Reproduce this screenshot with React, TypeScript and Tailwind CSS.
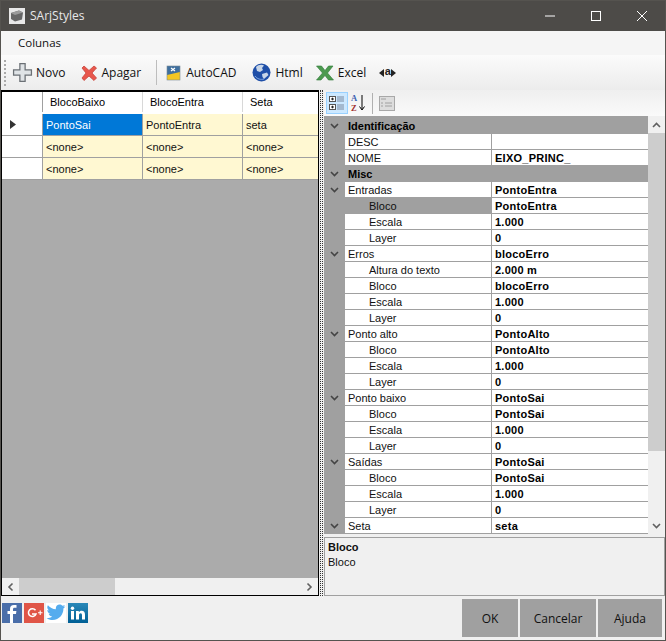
type PropRow = { label: string; value?: string; kind?: "cat" | "group" | "child" | "plain"; selected?: boolean };

const propRows: PropRow[] = [
  { label: "Identificação", kind: "cat" },
  { label: "DESC", value: "", kind: "plain" },
  { label: "NOME", value: "EIXO_PRINC_", kind: "plain" },
  { label: "Misc", kind: "cat" },
  { label: "Entradas", value: "PontoEntra", kind: "group" },
  { label: "Bloco", value: "PontoEntra", kind: "child", selected: true },
  { label: "Escala", value: "1.000", kind: "child" },
  { label: "Layer", value: "0", kind: "child" },
  { label: "Erros", value: "blocoErro", kind: "group" },
  { label: "Altura do texto", value: "2.000 m", kind: "child" },
  { label: "Bloco", value: "blocoErro", kind: "child" },
  { label: "Escala", value: "1.000", kind: "child" },
  { label: "Layer", value: "0", kind: "child" },
  { label: "Ponto alto", value: "PontoAlto", kind: "group" },
  { label: "Bloco", value: "PontoAlto", kind: "child" },
  { label: "Escala", value: "1.000", kind: "child" },
  { label: "Layer", value: "0", kind: "child" },
  { label: "Ponto baixo", value: "PontoSai", kind: "group" },
  { label: "Bloco", value: "PontoSai", kind: "child" },
  { label: "Escala", value: "1.000", kind: "child" },
  { label: "Layer", value: "0", kind: "child" },
  { label: "Saídas", value: "PontoSai", kind: "group" },
  { label: "Bloco", value: "PontoSai", kind: "child" },
  { label: "Escala", value: "1.000", kind: "child" },
  { label: "Layer", value: "0", kind: "child" },
  { label: "Seta", value: "seta", kind: "group" },
];

const gridRows = [
  ["PontoSai", "PontoEntra", "seta"],
  ["<none>", "<none>", "<none>"],
  ["<none>", "<none>", "<none>"],
];

function Chevron({ up = false, className = "" }: { up?: boolean; className?: string }) {
  return (
    <svg width="9" height="6" viewBox="0 0 9 6" className={className}>
      <path d={up ? "M1 5L4.5 1.5L8 5" : "M1 1L4.5 4.5L8 1"} fill="none" stroke="currentColor" strokeWidth="1.6" />
    </svg>
  );
}

function ToolButton({ icon, label, className = "" }: { icon: React.ReactNode; label: string; className?: string }) {
  return (
    <div className={`flex items-center gap-[3px] ${className}`}>
      {icon}
      <span className="text-[12px] text-[#111]">{label}</span>
    </div>
  );
}

function SocialIcons() {
  return (
    <div className="flex gap-[2px] pl-[1px] pt-[7px]">
      <svg width="20" height="20" viewBox="0 0 20 20">
        <rect width="20" height="20" fill="#4a6ea9" />
        <path d="M11 20V11H14L14.400 8H11V6.300C11 5.400 11.400 4.800 12.500 4.800H14.500V2H12C9.300 2 8 3.600 8 6V8H5.500V11H8V20Z" fill="#fff" />
      </svg>
      <svg width="20" height="20" viewBox="0 0 20 20">
        <rect width="20" height="20" fill="#e05547" />
        <path d="M11.500 7.300A3.900 3.900 0 1 0 12 11H8" fill="none" stroke="#fff" strokeWidth="1.500" />
        <path d="M14 9.800H18.500M16.200 7.600V12" stroke="#fff" strokeWidth="1.100" />
      </svg>
      <svg width="20" height="20" viewBox="0 0 20 20">
        <rect width="20" height="20" fill="#fff" />
        <path d="M19.500 3.200C18.800 3.600 18 3.800 17.300 3.900C18 3.400 18.600 2.700 18.900 1.900C18.100 2.300 17.300 2.700 16.400 2.800C15.700 2 14.700 1.500 13.600 1.500C11.500 1.500 9.800 3.200 9.800 5.400C9.800 5.700 9.800 6 9.900 6.200C6.700 6.100 3.800 4.500 1.900 2.200C1.500 2.800 1.300 3.500 1.300 4.200C1.300 5.500 2 6.700 3 7.400C2.400 7.400 1.800 7.200 1.300 6.900C1.300 8.800 2.700 10.400 4.400 10.700C3.800 10.900 3.200 10.900 2.600 10.800C3.100 12.300 4.500 13.400 6.200 13.500C4.500 14.800 2.500 15.400 0.500 15.200C2.300 16.400 4.400 17 6.500 17C13.500 17 17.400 11.100 17.400 6C17.400 5.800 17.400 5.600 17.400 5.500C18.200 4.900 18.900 4.100 19.500 3.200Z" fill="#55acee" />
      </svg>
      <svg width="20" height="20" viewBox="0 0 20 20">
        <defs>
          <linearGradient id="lnk" x1="0" y1="0" x2="0" y2="1">
            <stop offset="0" stopColor="#2a88b8" />
            <stop offset="1" stopColor="#005f95" />
          </linearGradient>
        </defs>
        <rect width="20" height="20" fill="url(#lnk)" />
        <rect x="3" y="8" width="3" height="8.500" fill="#fff" />
        <circle cx="4.500" cy="5.200" r="1.700" fill="#fff" />
        <path d="M8 8H10.800V9.300C11.400 8.400 12.400 7.800 13.600 7.800C16 7.800 17 9.300 17 11.800V16.500H14V12.300C14 11 13.600 10.300 12.600 10.300C11.600 10.300 11 11 11 12.300V16.500H8Z" fill="#fff" />
      </svg>
    </div>
  );
}

function PropertyRow({ row }: { row: PropRow }) {
  if (row.kind === "cat") {
    const first = row.label === "Identificação";
    return (
      <div className={`flex items-center bg-[#a0a0a0] ${first ? "h-[18px] pt-px" : "h-[16px]"}`}>
        <div className="flex w-[21px] justify-center text-[#444]">
          <Chevron />
        </div>
        <span className="pl-[3px] pt-px text-[11px] font-bold text-black">{row.label}</span>
      </div>
    );
  }
  const isChild = row.kind === "child";
  return (
    <div className="flex h-[16px] bg-[#a0a0a0]">
      <div className="flex w-[21px] items-center justify-center text-[#444]">
        {row.kind === "group" && <Chevron />}
      </div>
      <div
        className={`flex w-[146px] items-center truncate border-b border-[#a0a0a0] pt-px text-[11px] text-[#111] ${
          row.selected ? "bg-[#a0a0a0]" : "bg-white"
        } ${isChild ? "pl-[24px]" : "pl-[3px]"}`}
      >
        {row.label}
      </div>
      <div className="ml-px flex flex-1 items-center border-b border-[#a0a0a0] bg-white pl-[3px] pt-px text-[11px] font-bold tracking-[0.25px] text-black">
        {row.value}
      </div>
    </div>
  );
}

export default function App() {
  return (
    <div className="flex h-[641px] w-[666px] flex-col overflow-hidden border border-[#55534f] bg-[#f0f0f0] font-['Liberation_Sans',sans-serif] text-[11px]">
      {/* Title bar */}
      <div className="flex h-[30px] shrink-0 items-center bg-[#4d4b48]">
        <div className="ml-[8px] flex h-[16px] w-[16px] items-center justify-center bg-[#e8e8e8]">
          <svg width="14" height="14" viewBox="0 0 14 14">
            <path d="M1 4L9 1.500L13 3.500L12 10.500L5 12.500L1 10Z" fill="#666" />
            <path d="M1 4L9 1.500L13 3.500L5 6Z" fill="#9a9a9a" />
          </svg>
        </div>
        <span className="ml-[5px] font-['Open_Sans',sans-serif] text-[12px] text-[#e8e8e8]">SArjStyles</span>
        <div className="ml-auto flex items-center">
          <svg width="46" height="30" viewBox="0 0 46 30">
            <path d="M18 15H28" stroke="#fff" strokeWidth="1" />
          </svg>
          <svg width="46" height="30" viewBox="0 0 46 30">
            <rect x="18.500" y="10.500" width="9" height="9" fill="none" stroke="#fff" />
          </svg>
          <svg width="46" height="30" viewBox="0 0 46 30">
            <path d="M18 10L28 20M28 10L18 20" stroke="#fff" strokeWidth="1" />
          </svg>
        </div>
      </div>

      {/* Menu */}
      <div className="flex h-[24px] shrink-0 items-center bg-[#f5f5f5] pl-[17px] font-['Open_Sans',sans-serif] text-[11.500px] text-[#111]">
        Colunas
      </div>

      {/* Toolbar */}
      <div className="flex h-[35px] shrink-0 items-center bg-gradient-to-b from-[#fbfbfb] to-[#ececec] font-['Open_Sans',sans-serif]">
        <div className="ml-[3px] h-[26px] w-[2px] border-l-2 border-dotted border-[#aaa]" />
        <ToolButton
          className="ml-[6px]"
          label="Novo"
          icon={
            <svg width="21" height="21" viewBox="0 0 20 20">
              <path d="M7.500 1.500H12.500V7.500H18.500V12.500H12.500V18.500H7.500V12.500H1.500V7.500H7.500Z" fill="#dfe3e6" stroke="#6b7075" strokeWidth="1.200" />
            </svg>
          }
        />
        <ToolButton
          className="ml-[15px]"
          label="Apagar"
          icon={
            <svg width="18" height="18" viewBox="0 0 18 18">
              <path d="M2 4L4 2L9 6.500L14 2L16.500 4L12 9L16.500 14L14 16.500L9 12L4 16.500L2 14L6 9Z" fill="#e8574c" stroke="#c8453c" strokeWidth="0.800" />
            </svg>
          }
        />
        <div className="ml-[15px] h-[25px] w-px bg-[#bdbdbd]" />
        <ToolButton
          className="ml-[9px]"
          label="AutoCAD"
          icon={
            <svg width="16" height="17" viewBox="0 0 16 17" className="mr-[1px]">
              <rect x="1" y="2" width="13" height="14" fill="#f3c623" />
              <path d="M1 2H14V8L1 11Z" fill="#3f6f9e" />
              <path d="M5 4L9 7M9 4L5 7" stroke="#fff" strokeWidth="1.200" />
              <rect x="1" y="2" width="13" height="14" fill="none" stroke="#7a8a96" strokeWidth="0.600" />
            </svg>
          }
        />
        <ToolButton
          className="ml-[16px]"
          label="Html"
          icon={
            <svg width="19" height="19" viewBox="0 0 19 19" className="mr-[1px]">
              <circle cx="9.500" cy="9.500" r="9" fill="#1f4fa8" />
              <path d="M4 4C6 1.500 10 1 12 2.500L10 5L11 7L8 9L5 8ZM10 11L15 9.500L16.500 12L12 16L10.500 14Z" fill="#c8d6e8" />
              <path d="M3 13C5 16 9 17 12 16" stroke="#7ea6e0" fill="none" />
            </svg>
          }
        />
        <ToolButton
          className="ml-[13px]"
          label="Excel"
          icon={
            <svg width="18" height="16" viewBox="0 0 18 16" className="mr-[1px]">
              <path d="M0.500 1H5.500L9 5.500L12.500 1H17L11.500 8L17.500 15H12.500L9 10.500L5 15H0.500L6.500 8Z" fill="#4c9a4f" stroke="#2f7a3a" strokeWidth="0.600" />
            </svg>
          }
        />
        <div className="ml-[13px] flex items-center font-['Liberation_Sans',sans-serif] text-[11px] font-bold leading-none text-[#222]">
          <svg width="5" height="8" viewBox="0 0 5 8">
            <path d="M0 4L5 0V8Z" fill="#222" />
          </svg>
          <span className="-mt-[2px] px-[0.5px]">a</span>
          <svg width="5" height="8" viewBox="0 0 5 8">
            <path d="M5 4L0 0V8Z" fill="#222" />
          </svg>
        </div>
      </div>

      {/* Body */}
      <div className="flex h-[506px] shrink-0">
        {/* Data grid */}
        <div className="flex w-[318px] flex-col border border-t-2 border-black bg-[#ababab]">
          <div className="flex h-[22px] bg-white pb-[2px]">
            <div className="w-[41px] border-r border-[#a0a0a0]" />
            <div className="flex w-[100px] items-center border-r border-[#d8d8d8] pl-[7px]">BlocoBaixo</div>
            <div className="flex w-[100px] items-center border-r border-[#d8d8d8] pl-[7px]">BlocoEntra</div>
            <div className="flex flex-1 items-center pl-[7px]">Seta</div>
          </div>
          {gridRows.map((cells, r) => (
            <div key={r} className="flex h-[22px] border-b border-[#a0a0a0]">
              <div className="flex w-[41px] items-center border-r border-[#a0a0a0] bg-white pl-[8px]">
                {r === 0 && (
                  <svg width="6" height="9" viewBox="0 0 6 9">
                    <path d="M0 0L6 4.500L0 9Z" fill="#333" />
                  </svg>
                )}
              </div>
              {cells.map((c, i) => (
                <div
                  key={i}
                  className={`flex items-center pl-[3px] pt-[2px] ${i === 2 ? "flex-1" : "w-[100px] border-r border-[#a0a0a0]"} ${
                    r === 0 && i === 0 ? "bg-[#0078d7] text-white" : "bg-[#fff8d2] text-[#111]"
                  }`}
                >
                  {c}
                </div>
              ))}
            </div>
          ))}
          <div className="flex-1" />
          <div className="flex h-[17px] items-center bg-[#f0f0f0] text-[#606060]">
            <div className="flex w-[17px] items-center justify-center">
              <Chevron up className="-rotate-90" />
            </div>
            <div className="h-full w-[96px] bg-[#cdcdcd]" />
            <div className="ml-auto flex w-[17px] items-center justify-center">
              <Chevron up className="rotate-90" />
            </div>
          </div>
        </div>

        {/* Splitter */}
        <div className="mx-[1px] w-[3px] border-x border-dotted border-[#333]" />

        {/* Property grid */}
        <div className="flex flex-1 flex-col">
          <div className="flex h-[26px] shrink-0 items-center bg-gradient-to-b from-[#efefef] to-[#fafafa] pl-[2px]">
            <div className="flex h-[22px] w-[22px] items-center justify-center border border-[#99d1ff] bg-[#cce8ff]">
              <svg width="16" height="16" viewBox="0 0 16 16">
                <rect x="0.500" y="1.500" width="6" height="5" fill="#fff" stroke="#555" />
                <rect x="0.500" y="9.500" width="6" height="5" fill="#fff" stroke="#555" />
                <path d="M2 4H5M3.500 2.700V5.300M2 12H5M3.500 10.700V13.300" stroke="#222" />
                <path d="M8 2H15M8 4H15M8 6H15M8 10H15M8 12H15M8 14H15" stroke="#7c8aa0" />
              </svg>
            </div>
            <div className="ml-[3px] flex w-[17px] items-center font-['Liberation_Serif',serif] text-[8.500px] font-bold leading-[10px]">
              <div className="flex flex-col">
                <span className="text-[#3a5fb0]">A</span>
                <span className="text-[#a0302e]">Z</span>
              </div>
              <svg width="6" height="16" viewBox="0 0 6 16" className="ml-[2px]">
                <path d="M3 0V14M0.500 11.500L3 15L5.500 11.500" fill="none" stroke="#000" strokeWidth="1" />
              </svg>
            </div>
            <div className="ml-[4px] h-[21px] w-px bg-[#b0b0b0]" />
            <svg width="16" height="15" viewBox="0 0 16 15" className="ml-[6px]">
              <rect x="0.500" y="0.500" width="15" height="14" fill="#ddd" stroke="#a8a8a8" />
              <path d="M2 3H7M6 7H13M6 10H13M2 7H4M2 10H4" stroke="#a0a0a0" />
            </svg>
          </div>

          <div className="flex h-[418px] shrink-0">
            <div className="w-[324px] overflow-hidden bg-[#a0a0a0]">
              {propRows.map((row, i) => (
                <PropertyRow key={i} row={row} />
              ))}
            </div>
            <div className="flex w-[17px] flex-col justify-between bg-[#f0f0f0] text-[#606060]">
              <div className="flex h-[17px] items-center justify-center">
                <Chevron up />
              </div>
              <div className="mb-[66px] flex-1 bg-[#cdcdcd]" />
              <div className="flex h-[17px] items-center justify-center">
                <Chevron />
              </div>
            </div>
          </div>

          <div className="mt-[3px] h-[59px] border border-[#a0a0a0] bg-[#f0f0f0] pl-[3px] pt-[2px] leading-[15px] text-[#111]">
            <div className="font-bold">Bloco</div>
            <div>Bloco</div>
          </div>
        </div>
      </div>

      {/* Footer */}
      <div className="flex flex-1 justify-between">
        <SocialIcons />
        <div className="flex gap-[2px] pr-[3px] pt-[3px] font-['Open_Sans',sans-serif] text-[12px] text-[#111]">
          <div className="flex h-[38px] w-[56px] items-center justify-center bg-[#a0a0a0] pt-[1px]">OK</div>
          <div className="flex h-[38px] w-[76px] items-center justify-center bg-[#a0a0a0] pt-[1px]">Cancelar</div>
          <div className="flex h-[38px] w-[64px] items-center justify-center bg-[#a0a0a0] pt-[1px]">Ajuda</div>
        </div>
      </div>
    </div>
  );
}
